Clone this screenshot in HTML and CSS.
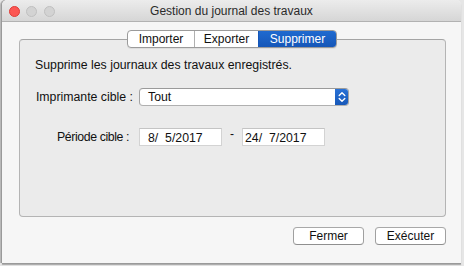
FILE: index.html
```html
<!DOCTYPE html>
<html lang="fr">
<head>
<meta charset="utf-8">
<title>Gestion du journal des travaux</title>
<link rel="stylesheet" href="styles.css">
</head>
<body>
<div class="window">
  <div class="titlebar">
    <div class="lights">
      <span class="light close"></span>
      <span class="light off"></span>
      <span class="light off"></span>
    </div>
    <div class="title">Gestion du journal des travaux</div>
  </div>
  <div class="content">
    <div class="tabs">
      <span class="tab">Importer</span>
      <span class="tab">Exporter</span>
      <span class="tab active">Supprimer</span>
    </div>
    <div class="group">
      <p class="desc">Supprime les journaux des travaux enregistrés.</p>
      <div class="form">
        <label class="lbl">Imprimante cible :</label>
        <div class="select">
          <span class="select-text">Tout</span>
          <span class="select-cap">
            <svg width="8" height="12" viewBox="0 0 8 12"><path d="M1.2 4.5 L4 1.8 L6.8 4.5 M1.2 7.5 L4 10.2 L6.8 7.5" fill="none" stroke="#fff" stroke-width="1.4" stroke-linecap="round" stroke-linejoin="round"/></svg>
          </span>
        </div>
        <label class="lbl lbl2">Période cible :</label>
        <div class="dates">
          <span class="field f1">8/&nbsp; 5/2017</span>
          <span class="dash">-</span>
          <span class="field f2">24/&nbsp; 7/2017</span>
        </div>
      </div>
    </div>
    <div class="buttons">
      <button class="btn">Fermer</button>
      <button class="btn">Exécuter</button>
    </div>
  </div>
</div>
</body>
</html>
```
FILE: styles.css
```css
* { box-sizing: border-box; }
html, body { margin: 0; padding: 0; }
body {
  width: 464px;
  height: 266px;
  background: #e6e6e6;
  font-family: "Liberation Sans", Arial, sans-serif;
  font-size: 12px;
  color: #111;
  overflow: hidden;
  display: flex;
  align-items: flex-start;
}
.window {
  margin-left: 2px;
  width: 459px;
  height: 263px;
  background: #f6f6f6;
  border-radius: 5px 5px 0 0;
  box-shadow: -1px 0 0 #9a9a9a, 0 1px 0 #9a9a9a, -2px 0 0 #b9b9b9, 0 2px 1px #a8a8a8;
  display: flex;
  flex-direction: column;
  overflow: hidden;
}
.titlebar {
  height: 22px;
  flex: none;
  background: linear-gradient(#ececec, #d6d6d6);
  border-bottom: 1px solid #b2b2b2;
  display: flex;
  align-items: center;
  position: relative;
}
.lights {
  display: flex;
  gap: 6.5px;
  padding-left: 6.5px;
  padding-top: 1px;
}
.light {
  width: 11px;
  height: 11px;
  border-radius: 50%;
}
.light.close { background: #fc5753; border: 1px solid #df3d38; }
.light.off { background: #d3d3d3; border: 1px solid #c0c0c0; }
.title {
  position: absolute;
  left: 0;
  right: 0;
  top: 3px;
  text-align: center;
  color: #2a2a2a;
  font-size: 12px;
  line-height: 16px;
}
.content {
  flex: 1;
  display: flex;
  flex-direction: column;
  padding: 8px 15px 0 17px;
}
.tabs {
  align-self: center;
  display: flex;
  height: 18px;
  border: 1px solid #9b9b9b;
  border-radius: 4px;
  background: #fff;
  position: relative;
  z-index: 1;
  overflow: hidden;
  margin-left: -1px;
  box-shadow: 0 1px 0 rgba(0,0,0,0.06);
}
.tab {
  line-height: 16px;
  color: #111;
  border-left: 1px solid #b0b0b0;
  text-align: center;
}
.tab:first-child { border-left: none; width: 66px; }
.tab:nth-child(2) { width: 64px; }
.tab.active {
  background: linear-gradient(#1f6ad0, #1556b8);
  color: #fff;
  border-left-color: #1556b8;
  width: 78px;
}
.group {
  margin-top: -9px;
  height: 178px;
  background: #ebebeb;
  border: 1px solid #b4b4b4;
  border-top-color: #a5a5a5;
  border-radius: 4px;
  padding: 17px 0 0 15px;
}
.desc {
  margin: 0;
  line-height: 16px;
  font-size: 12.3px;
}
.form {
  margin-top: 15px;
  display: grid;
  grid-template-columns: 98px auto;
  column-gap: 6px;
  row-gap: 22px;
  align-items: center;
}
.lbl {
  text-align: right;
  white-space: nowrap;
  line-height: 16px;
  font-size: 12.3px;
}
.lbl2 { padding-right: 4px; letter-spacing: -0.4px; }
.select {
  width: 210px;
  height: 18px;
  display: flex;
  background: #fff;
  border: 1px solid #a3a3a3;
  border-top-color: #9a9a9a;
  border-bottom-color: #b0b0b0;
  border-radius: 4px;
  overflow: hidden;
}
.select-text {
  flex: 1;
  line-height: 16px;
  padding-left: 8px;
  font-size: 12.3px;
}
.select-cap {
  width: 14px;
  background: linear-gradient(#2a73d8, #1656b6);
  display: flex;
  align-items: center;
  justify-content: center;
  margin: -1px -1px -1px 0;
}
.dates {
  display: flex;
  align-items: center;
}
.field {
  height: 18px;
  background: #fff;
  border: 1px solid #d3d3d3;
  border-top-color: #c4c4c4;
  line-height: 17px;
  padding-left: 8px;
  padding-top: 1px;
  font-size: 12.3px;
}
.f1 { width: 83px; }
.f2 { width: 83px; padding-left: 2px; }
.dash {
  width: 20px;
  text-align: center;
  line-height: 12px;
  margin-top: -6px;
}
.buttons {
  display: flex;
  justify-content: flex-end;
  gap: 11px;
  margin-top: 10px;
}
.btn {
  width: 71px;
  height: 18px;
  background: #fff;
  border: 1px solid #a0a0a0;
  border-top-color: #a8a8a8;
  border-bottom-color: #8f8f8f;
  border-radius: 4px;
  font-family: "Liberation Sans", Arial, sans-serif;
  font-size: 12px;
  line-height: 16px;
  color: #111;
  padding: 0;
}
```
